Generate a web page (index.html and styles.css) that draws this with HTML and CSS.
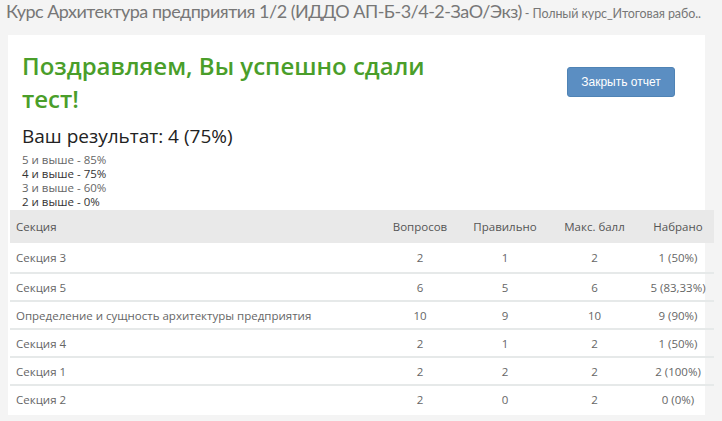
FILE: index.html
```html
<!DOCTYPE html>
<html lang="ru">
<head>
<meta charset="utf-8">
<title>Результат теста</title>
<link rel="stylesheet" href="styles.css">
</head>
<body>
<div class="page-title"><span class="course">Курс Архитектура предприятия 1/2 (ИДДО АП-Б-3/4-2-ЗаО/Экз)</span><span class="sub"> - Полный курс_Итоговая рабо..</span></div>
<div class="panel">
  <div class="top">
    <div class="result">
      <h1 class="congrats">Поздравляем, Вы успешно сдали тест!</h1>
      <div class="score">Ваш результат: 4 (75%)</div>
      <ul class="scale">
        <li class="light">5 и выше - 85%</li>
        <li>4 и выше - 75%</li>
        <li class="light">3 и выше - 60%</li>
        <li>2 и выше - 0%</li>
      </ul>
    </div>
    <button class="btn" type="button">Закрыть отчет</button>
  </div>
  <table class="report">
    <colgroup>
      <col class="c-name"><col class="c-q"><col class="c-ok"><col class="c-max"><col class="c-got">
    </colgroup>
    <thead>
      <tr><th class="left">Секция</th><th>Вопросов</th><th>Правильно</th><th>Макс. балл</th><th class="got">Набрано</th></tr>
    </thead>
    <tbody>
      <tr><td class="left">Секция 3</td><td>2</td><td>1</td><td>2</td><td class="got">1 (50%)</td></tr>
      <tr><td class="left">Секция 5</td><td>6</td><td>5</td><td>6</td><td class="got">5 (83,33%)</td></tr>
      <tr><td class="left">Определение и сущность архитектуры предприятия</td><td>10</td><td>9</td><td>10</td><td class="got">9 (90%)</td></tr>
      <tr><td class="left">Секция 4</td><td>2</td><td>1</td><td>2</td><td class="got">1 (50%)</td></tr>
      <tr><td class="left">Секция 1</td><td>2</td><td>2</td><td>2</td><td class="got">2 (100%)</td></tr>
      <tr><td class="left">Секция 2</td><td>2</td><td>0</td><td>2</td><td class="got">0 (0%)</td></tr>
    </tbody>
  </table>
</div>
</body>
</html>
```
FILE: styles.css
```css
html, body {
  margin: 0;
  padding: 0;
}
body {
  background: #f4f4f4;
  font-family: "Open Sans", "Liberation Sans", sans-serif;
  overflow: hidden;
  width: 722px;
  height: 421px;
}
.page-title {
  height: 35px;
  padding: 0 0 0 6px;
  white-space: nowrap;
  overflow: hidden;
  color: #777;
  font-family: Lato, "Open Sans", sans-serif;
  line-height: 22px;
}
.page-title .course {
  font-size: 18px;
  letter-spacing: -0.5px;
}
.page-title .sub {
  font-size: 12.5px;
  letter-spacing: -0.1px;
}
.panel {
  background: #fff;
  margin: 0 17px 0 8px;
  padding: 14px 0 3px 0;
}
.top {
  display: flex;
  justify-content: space-between;
  align-items: flex-start;
  padding: 0 30px 0 14px;
}
.result {
  width: 420px;
}
.congrats {
  margin: 0;
  color: #4a9e2a;
  font-size: 24px;
  font-weight: 600;
  line-height: 33px;
}
.score {
  margin-top: 9px;
  font-size: 19px;
  color: #222;
  line-height: 24px;
}
.scale {
  list-style: none;
  margin: 5px 0 0 0;
  padding: 0;
  font-size: 11.5px;
  line-height: 14px;
  color: #333;
}
.scale .light {
  color: #666;
}
.btn {
  margin-top: 18px;
  width: 108px;
  height: 30px;
  border: 1px solid #4f83b5;
  border-radius: 3px;
  background: #5b8ec2;
  color: #fff;
  font-family: "Liberation Sans", Arial, sans-serif;
  font-size: 12px;
  padding: 0;
}
.report {
  margin: 1px 0 0 2px;
  width: 704px;
  border-collapse: collapse;
  table-layout: fixed;
  font-family: "Open Sans", Lato, sans-serif;
  font-size: 11.5px;
  color: #666;
}
.c-name { width: 375px; }
.c-q { width: 70px; }
.c-ok { width: 100px; }
.c-max { width: 79px; }
.c-got { width: 80px; }
.report th {
  background: #e9e9e9;
  font-weight: normal;
  color: #555;
  height: 33px;
  padding: 0;
  text-align: center;
}
.report td {
  height: 26px;
  padding: 0;
  text-align: center;
  border-top: 2px solid #e6e9e9;
}
.report tbody tr:first-child td {
  border-top: none;
  height: 29px;
}
.report .left {
  text-align: left;
  padding-left: 6px;
}
.report .got {
  padding-left: 8px;
  white-space: nowrap;
}
```
